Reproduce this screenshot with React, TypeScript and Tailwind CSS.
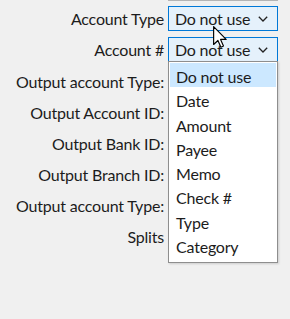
import React from "react";

const labels = [
  "Output account Type:",
  "Output Account ID:",
  "Output Bank ID:",
  "Output Branch ID:",
  "Output account Type:",
  "Splits",
];

const options = ["Do not use", "Date", "Amount", "Payee", "Memo", "Check #", "Type", "Category"];

const Chevron = () => (
  <svg width="10" height="6" viewBox="0 0 10 6" className="shrink-0">
    <path d="M0.8 0.8 L5 5 L9.2 0.8" fill="none" stroke="#222" strokeWidth="1.3" />
  </svg>
);

const Combo = ({ value }: { value: string }) => (
  <div className="flex h-[25px] w-[110px] items-center justify-between border border-[#0078d7] bg-[#e5f1fb] pl-[6px] pr-[9px]">
    <span className="whitespace-nowrap leading-[24px]">{value}</span>
    <Chevron />
  </div>
);

const Cursor = () => (
  <svg width="14" height="22" viewBox="0 0 12 19" className="absolute left-[213px] top-[26px]">
    <path
      d="M0.5 0.5 L0.5 16 L4.2 12.5 L6.8 18.3 L9 17.3 L6.5 11.6 L11.3 11.6 Z"
      fill="#fff"
      stroke="#000"
      strokeWidth="1"
      strokeLinejoin="round"
    />
  </svg>
);

export default function App() {
  return (
    <div
      className="relative h-[319px] w-[290px] overflow-hidden bg-[#f0f0f0] text-[16px] tracking-[-0.2px] text-[#1c1c1c]"
      style={{ fontFamily: 'Lato, "Open Sans", sans-serif' }}
    >
      <div className="flex">
        <div className="w-[168px]" />
        <div className="h-px w-[110px] bg-[#b4b4b4]" />
      </div>

      <div className="flex flex-col pt-[5px]">
        <div className="flex h-[25px] items-center gap-[4px]">
          <div className="w-[164px] whitespace-nowrap text-right leading-[24px]">Account Type</div>
          <Combo value="Do not use" />
        </div>
        <div className="mt-[6px] flex h-[25px] items-center gap-[4px]">
          <div className="w-[164px] whitespace-nowrap text-right leading-[24px]">Account #</div>
          <Combo value="Do not use" />
        </div>
        <div className="mt-[4px] flex flex-col">
          {labels.map((l, i) => (
            <div key={i} className="flex h-[31px] items-center">
              <div className="w-[164px] whitespace-nowrap text-right leading-[24px]">{l}</div>
            </div>
          ))}
        </div>
      </div>

      {/* open dropdown list */}
      <div className="absolute left-[168px] top-[61px] flex h-[202px] w-[110px] flex-col border border-[#8e8e8e] bg-white p-px shadow-[1px_1px_2px_rgba(0,0,0,0.15)]">
        {options.map((o, i) => (
          <div
            key={o}
            className={`h-[24.3px] whitespace-nowrap pl-[6px] pt-[2px] leading-[24px] ${i === 0 ? "bg-[#cce8ff]" : ""}`}
          >
            {o}
          </div>
        ))}
      </div>

      <Cursor />
    </div>
  );
}
